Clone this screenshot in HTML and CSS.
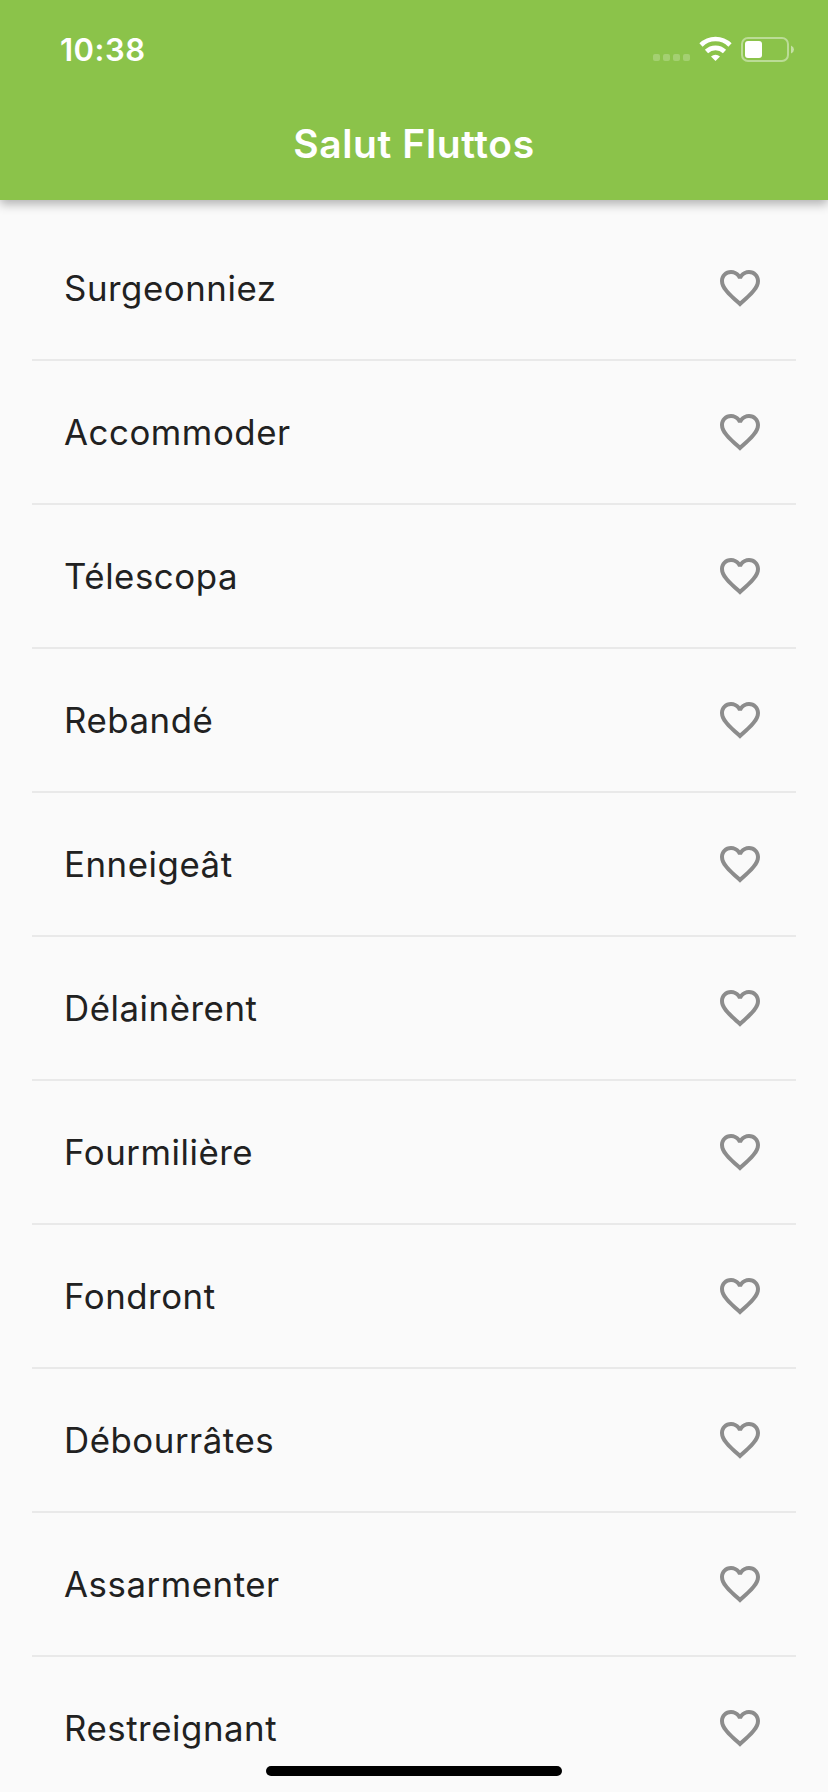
FILE: index.html
```html
<!DOCTYPE html>
<html lang="fr"><head><meta charset="utf-8"><title>Salut Fluttos</title><link rel="stylesheet" href="styles.css"></head>
<body>
<svg class="defs" width="0" height="0"><symbol id="heart" viewBox="0 0 24 24"><path d="M16.5 3c-1.74 0-3.41.81-4.5 2.09C10.91 3.81 9.24 3 7.5 3 4.42 3 2 5.42 2 8.5c0 3.78 3.4 6.86 8.55 11.54L12 21.35l1.45-1.32C18.6 15.36 22 12.28 22 8.5 22 5.42 19.58 3 16.5 3zm-4.4 15.55l-.1.1-.1-.1C7.14 14.24 4 11.39 4 8.5 4 6.5 5.5 5 7.5 5c1.54 0 3.04.99 3.57 2.36h1.87C13.46 5.99 14.96 5 16.5 5c2 0 3.5 1.5 3.5 3.5 0 2.89-3.14 5.74-7.9 10.05z"/></symbol></svg>
<header class="appbar">
<div class="status"><span class="time">10:38</span>
<svg class="indicators" width="144" height="30" viewBox="0 0 144 30"><g fill="#fff" fill-opacity=".22"><rect x="1" y="19" width="7" height="7" rx="2"/><rect x="11" y="19" width="7" height="7" rx="2"/><rect x="21" y="19" width="7" height="7" rx="2"/><rect x="31" y="19" width="7" height="7" rx="2"/></g>
<g fill="none" stroke="#fff" stroke-width="4.6"><path d="M49 10A20.500 20.500 0 0 1 78 10"/><path d="M54.500 16.500A13 13 0 0 1 72.500 16.500"/></g><path d="M59 21.500A7 7 0 0 1 68 21.500L63.500 26Z" fill="#fff"/>
<rect x="90" y="3" width="46" height="23" rx="6" fill="none" stroke="#fff" stroke-opacity=".42" stroke-width="2"/><path d="M139 10.500Q142 12 142 14.500T139 18.500Z" fill="#fff" fill-opacity=".5"/><rect x="93" y="6" width="17" height="17" rx="3" fill="#fff"/></svg></div>
<h1 class="title">Salut Fluttos</h1></header>
<main class="list">
<div class="row"><span>Surgeonniez</span><svg class="heart"><use href="#heart"/></svg></div>
<div class="row"><span>Accommoder</span><svg class="heart"><use href="#heart"/></svg></div>
<div class="row"><span>Télescopa</span><svg class="heart"><use href="#heart"/></svg></div>
<div class="row"><span>Rebandé</span><svg class="heart"><use href="#heart"/></svg></div>
<div class="row"><span>Enneigeât</span><svg class="heart"><use href="#heart"/></svg></div>
<div class="row"><span>Délainèrent</span><svg class="heart"><use href="#heart"/></svg></div>
<div class="row"><span>Fourmilière</span><svg class="heart"><use href="#heart"/></svg></div>
<div class="row"><span>Fondront</span><svg class="heart"><use href="#heart"/></svg></div>
<div class="row"><span>Débourrâtes</span><svg class="heart"><use href="#heart"/></svg></div>
<div class="row"><span>Assarmenter</span><svg class="heart"><use href="#heart"/></svg></div>
<div class="row"><span>Restreignant</span><svg class="heart"><use href="#heart"/></svg></div>
</main><div class="home"></div></body></html>
```
FILE: styles.css
```css
* { box-sizing: border-box; }
body { margin: 0; height: 1792px; overflow: hidden; position: relative; background: #fafafa; font-family: Inter, "Liberation Sans", sans-serif; }
.defs { position: absolute; }
.appbar { position: relative; height: 200px; background: #8bc34a; color: #fff; box-shadow: 0 4px 10px rgba(0,0,0,.3); }
.status { height: 88px; padding: 35px 32px 0 60px; display: flex; justify-content: space-between; }
.time { font-size: 31px; line-height: 30px; font-weight: 600; letter-spacing: .5px; }
.title { margin: 0; height: 112px; line-height: 112px; text-align: center; font-size: 39px; font-weight: 600; letter-spacing: .6px; }
.list { padding: 17px 32px 0; }
.row { height: 144px; padding: 0 32px; display: flex; align-items: center; justify-content: space-between; border-bottom: 2px solid #e9e9e9; font-size: 34.8px; font-weight: 400; letter-spacing: .55px; color: #212121; }
.heart { width: 48px; height: 48px; fill: #8c8c8c; }
.home { position: absolute; left: 266px; bottom: 16px; width: 296px; height: 10px; border-radius: 5px; background: #000; }
```
